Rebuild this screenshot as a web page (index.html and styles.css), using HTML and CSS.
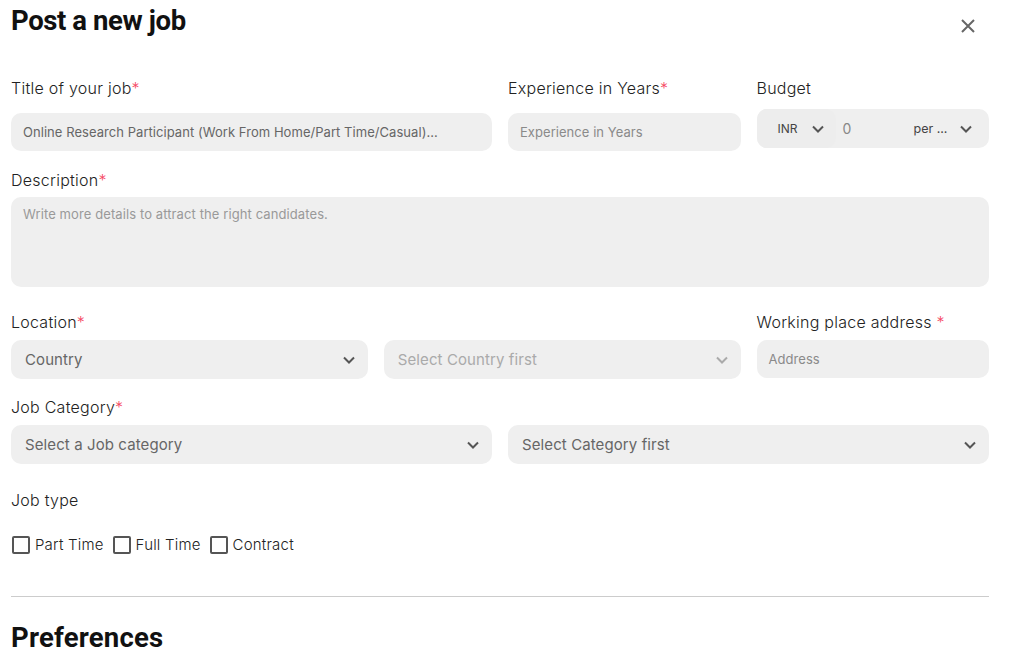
FILE: index.html
```html
<!DOCTYPE html>
<html>
<head>
<meta charset="utf-8">
<link rel="stylesheet" href="styles.css">
</head>
<body>
<div class="modal">
  <header class="modal-head">
    <h1 class="heading">Post a new job</h1>
    <button class="close" aria-label="Close">
      <svg width="14" height="14" viewBox="0 0 14 14"><path d="M1 1L13 13M13 1L1 13" stroke="#666" stroke-width="2" fill="none"/></svg>
    </button>
  </header>

  <div class="row row-1">
    <div class="field span-2">
      <label class="label">Title of your job<span class="req">*</span></label>
      <div class="input">Online Research Participant (Work From Home/Part Time/Casual)...</div>
    </div>
    <div class="field">
      <label class="label">Experience in Years<span class="req">*</span></label>
      <div class="input placeholder">Experience in Years</div>
    </div>
    <div class="field">
      <label class="label label-tight">Budget</label>
      <div class="budget">
        <div class="currency"><span>INR</span><svg class="chev" width="12" height="8" viewBox="0 0 12 8"><path d="M1 1.5L6 6.5L11 1.5" stroke="#555" stroke-width="2" fill="none"/></svg></div>
        <div class="amount">0</div>
        <div class="period"><span>per ...</span><svg class="chev" width="12" height="8" viewBox="0 0 12 8"><path d="M1 1.5L6 6.5L11 1.5" stroke="#555" stroke-width="2" fill="none"/></svg></div>
      </div>
    </div>
  </div>

  <div class="row row-2">
    <div class="field span-4">
      <label class="label label-desc">Description<span class="req">*</span></label>
      <div class="textarea placeholder">Write more details to attract the right candidates.</div>
    </div>
  </div>

  <div class="row row-3">
    <div class="field span-3">
      <label class="label label-close">Location<span class="req">*</span></label>
      <div class="pair">
        <div class="select"><span>Country</span><svg class="chev" width="12" height="8" viewBox="0 0 12 8"><path d="M1 1.5L6 6.5L11 1.5" stroke="#555" stroke-width="2" fill="none"/></svg></div>
        <div class="select disabled"><span>Select Country first</span><svg class="chev" width="12" height="8" viewBox="0 0 12 8"><path d="M1 1.5L6 6.5L11 1.5" stroke="#aaa" stroke-width="2" fill="none"/></svg></div>
      </div>
    </div>
    <div class="field">
      <label class="label label-close">Working place address <span class="req">*</span></label>
      <div class="input input-short placeholder">Address</div>
    </div>
  </div>

  <div class="row row-4">
    <div class="field span-2">
      <label class="label label-close">Job Category<span class="req">*</span></label>
      <div class="select"><span>Select a Job category</span><svg class="chev" width="12" height="8" viewBox="0 0 12 8"><path d="M1 1.5L6 6.5L11 1.5" stroke="#555" stroke-width="2" fill="none"/></svg></div>
    </div>
    <div class="field span-2 field-end">
      <div class="select"><span>Select Category first</span><svg class="chev" width="12" height="8" viewBox="0 0 12 8"><path d="M1 1.5L6 6.5L11 1.5" stroke="#555" stroke-width="2" fill="none"/></svg></div>
    </div>
  </div>

  <div class="jobtype">
    <div class="label">Job type</div>
    <div class="checks">
      <label class="check"><span class="box"></span>Part Time</label>
      <label class="check"><span class="box"></span>Full Time</label>
      <label class="check"><span class="box"></span>Contract</label>
    </div>
  </div>

  <hr class="divider">

  <h2 class="heading heading-2">Preferences</h2>
</div>
</body>
</html>
```

FILE: styles.css
```css
* { box-sizing: border-box; }

html, body {
  margin: 0;
  padding: 0;
  background: #fff;
  overflow: hidden;
}

body {
  font-family: Inter, "Open Sans", "Liberation Sans", sans-serif;
  color: #222;
}

.modal {
  width: 1009px;
  padding: 0 20px 0 11px;
}

.modal-head {
  display: flex;
  justify-content: space-between;
  align-items: flex-start;
  height: 48px;
}

.heading {
  margin: 0;
  font-family: Roboto, "Liberation Sans", sans-serif;
  font-weight: 700;
  font-size: 27.5px;
  line-height: 41px;
  letter-spacing: -0.4px;
  color: #111;
}

.close {
  border: 0;
  background: none;
  padding: 0;
  margin: 19px 14px 0 0;
  width: 14px;
  height: 14px;
  display: flex;
  cursor: pointer;
}

.row {
  display: grid;
  grid-template-columns: repeat(4, 1fr);
  column-gap: 16px;
}

.row-1 { margin-top: 28px; }
.row-2 { margin-top: 17px; }
.row-3 { margin-top: 23px; }
.row-4 { margin-top: 16px; }

.field {
  display: flex;
  flex-direction: column;
  min-width: 0;
}

.field-end { justify-content: flex-end; }

.span-2 { grid-column: span 2; }
.span-3 { grid-column: span 3; }
.span-4 { grid-column: span 4; }

.label {
  font-size: 16px;
  line-height: 24px;
  font-weight: 300;
  letter-spacing: 0.25px;
  color: #222;
  margin-bottom: 13px;
  white-space: nowrap;
}

.label-tight { margin-bottom: 9px; }
.label-desc { margin-bottom: 5px; }
.label-close { margin-bottom: 6px; }

.req { color: #f5475f; }

.input {
  height: 38px;
  background: #efefef;
  border-radius: 10px;
  padding: 0 12px;
  display: flex;
  align-items: center;
  font-size: 13px;
  letter-spacing: 0.05px;
  color: #666;
  white-space: nowrap;
  overflow: hidden;
}

.placeholder { color: #8a8a8a; }

.textarea {
  height: 90px;
  background: #efefef;
  border-radius: 10px;
  padding: 9px 12px;
  font-size: 13px;
  letter-spacing: 0.1px;
  color: #999;
}

.budget {
  height: 39px;
  background: #efefef;
  border-radius: 10px;
  display: flex;
  align-items: center;
  font-size: 12.5px;
}

.currency {
  width: 79px;
  height: 100%;
  display: flex;
  align-items: center;
  gap: 14px;
  padding-left: 21px;
  border-radius: 10px;
  background: #ededed;
  color: #444;
  font-size: 12px;
}

.amount {
  padding-left: 7px;
  width: 78px;
  color: #888;
  font-size: 14px;
}

.period {
  display: flex;
  align-items: center;
  gap: 13px;
  color: #444;
}

.pair {
  display: grid;
  grid-template-columns: 1fr 1fr;
  column-gap: 16px;
}

.select {
  height: 39px;
  background: #efefef;
  border-radius: 10px;
  display: flex;
  align-items: center;
  justify-content: space-between;
  padding: 0 13px 0 14px;
  font-size: 15px;
  letter-spacing: 0.1px;
  color: #666;
  white-space: nowrap;
}

.select.disabled { color: #aaa; }

.chev { flex: none; }

.jobtype { margin-top: 24px; }

.jobtype .label { margin-bottom: 24px; }

.checks {
  display: flex;
  gap: 8px;
  align-items: center;
}

.check {
  display: flex;
  align-items: center;
  gap: 5px;
  font-size: 15px;
  font-weight: 300;
  letter-spacing: 0.2px;
  color: #222;
  line-height: 18px;
}

.box {
  width: 18px;
  height: 18px;
  border: 2px solid #555;
  border-radius: 2px;
  margin-left: 1px;
}

.divider {
  margin: 42px 0 0;
  border: 0;
  border-top: 1px solid #ccc;
  width: 978px;
}

.heading-2 {
  margin-top: 20px;
  letter-spacing: 0.2px;
}
```
